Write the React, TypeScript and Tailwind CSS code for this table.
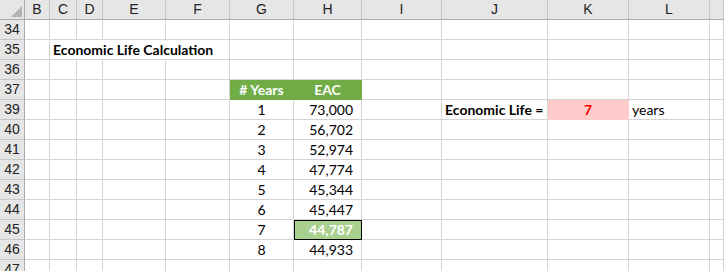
import React from 'react';

type Cell = {
  text?: string;
  align?: 'left' | 'center' | 'right';
  bold?: boolean;
  fill?: string;
  color?: string;
  outlined?: boolean;
  span?: number;
};

const COLUMNS = ['B', 'C', 'D', 'E', 'F', 'G', 'H', 'I', 'J', 'K', 'L', 'M'];

// Column widths in px, row header first.
const gridCols = 'grid-cols-[25px_25px_27px_26px_63px_64px_64px_68px_80px_106px_81px_81px_14px]';

const EAC = ['73,000', '56,702', '52,974', '47,774', '45,344', '45,447', '44,787', '44,933'];

type Row = { num: number; cells: Record<string, Cell> };

const buildRows = (): Row[] => {
  const rows: Row[] = [
    { num: 34, cells: {} },
    // title overflows C..F, so those gridlines are hidden
    { num: 35, cells: { C: { text: 'Economic Life Calculation', bold: true, span: 4 } } },
    { num: 36, cells: {} },
    {
      num: 37,
      cells: {
        G: { text: '# Years', align: 'center', bold: true, fill: 'green', color: 'white' },
        H: { text: 'EAC', align: 'center', bold: true, fill: 'green', color: 'white' },
      },
    },
  ];
  EAC.forEach((value, i) => {
    const cells: Record<string, Cell> = {
      G: { text: String(i + 1), align: 'center' },
      H: { text: value, align: 'right' },
    };
    if (i === 6) {
      cells.H = { text: value, align: 'right', bold: true, fill: 'lightgreen', color: 'white', outlined: true };
    }
    if (i === 0) {
      cells.J = { text: 'Economic Life =', bold: true };
      cells.K = { text: '7', align: 'center', bold: true, fill: 'pink', color: 'red' };
      cells.L = { text: 'years' };
    }
    rows.push({ num: i === 0 ? 39 : 39 + i, cells });
  });
  rows.push({ num: 47, cells: {} });
  return rows;
};

const fillClasses: Record<string, string> = {
  green: 'bg-[#70ad47] border-[#70ad47]',
  lightgreen: 'bg-[#a9d08e] border-[#a9d08e]',
  pink: 'bg-[#ffcccc] border-[#ffcccc]',
};

const colorClasses: Record<string, string> = {
  white: 'text-white',
  red: 'text-[#ff0000]',
};

const alignClasses = {
  left: 'justify-start pl-[3px]',
  center: 'justify-center',
  right: 'justify-end pr-[8px]',
};

const spanClasses: Record<number, string> = {
  1: '',
  4: 'col-span-4',
};

const SheetCell: React.FC<{ cell?: Cell }> = ({ cell }) => {
  const fill = cell?.fill ? fillClasses[cell.fill] : 'border-[#d4d4d4]';
  const align = alignClasses[cell?.align ?? 'left'];
  return (
    <div
      className={`h-5 flex items-center whitespace-nowrap border-r border-b ${spanClasses[cell?.span ?? 1]} ${fill} ${align} ${
        cell?.color ? colorClasses[cell.color] : 'text-black'
      } ${cell?.bold ? 'font-bold' : ''} ${cell?.outlined ? 'outline outline-1 outline-black -outline-offset-1' : ''}`}
    >
      {cell?.text && <span className="leading-none">{cell.text}</span>}
    </div>
  );
};

const RowCells: React.FC<{ row: Row }> = ({ row }) => {
  const out: React.ReactNode[] = [];
  let skip = 0;
  COLUMNS.forEach((col) => {
    if (skip > 0) {
      skip--;
      return;
    }
    const cell = row.cells[col];
    if (cell?.span) skip = cell.span - 1;
    out.push(<SheetCell key={col} cell={cell} />);
  });
  return <>{out}</>;
};

const App: React.FC = () => {
  const rows = buildRows();

  return (
    <div className="w-[724px] h-[271px] overflow-hidden bg-white text-[14px] font-['Lato','Liberation_Sans',sans-serif]">
      <div className={`grid ${gridCols}`}>
        {/* select-all corner */}
        <div className="h-5 bg-[#e6e6e6] border-r border-b border-[#ababab] relative">
          <svg className="absolute right-[2px] bottom-[2px]" width="11" height="11" viewBox="0 0 11 11">
            <polygon points="11,0 11,11 0,11" fill="#b4b4b4" />
          </svg>
        </div>
        {COLUMNS.map((col) => (
          <div
            key={col}
            className="h-5 flex items-center justify-center bg-[#e6e6e6] border-r border-[#c6c6c6] border-b-[#ababab] border-b text-[#222] text-[14px] font-['Liberation_Sans',sans-serif]"
          >
            {col !== 'M' && col}
          </div>
        ))}

        {rows.map((row) => (
          <React.Fragment key={row.num}>
            <div className="h-5 flex items-center justify-center bg-[#e6e6e6] border-r border-r-[#ababab] border-b border-b-[#c6c6c6] text-[#222] text-[14px] font-['Liberation_Sans',sans-serif]">
              {row.num}
            </div>
            <RowCells row={row} />
          </React.Fragment>
        ))}
      </div>
    </div>
  );
};

export default App;
